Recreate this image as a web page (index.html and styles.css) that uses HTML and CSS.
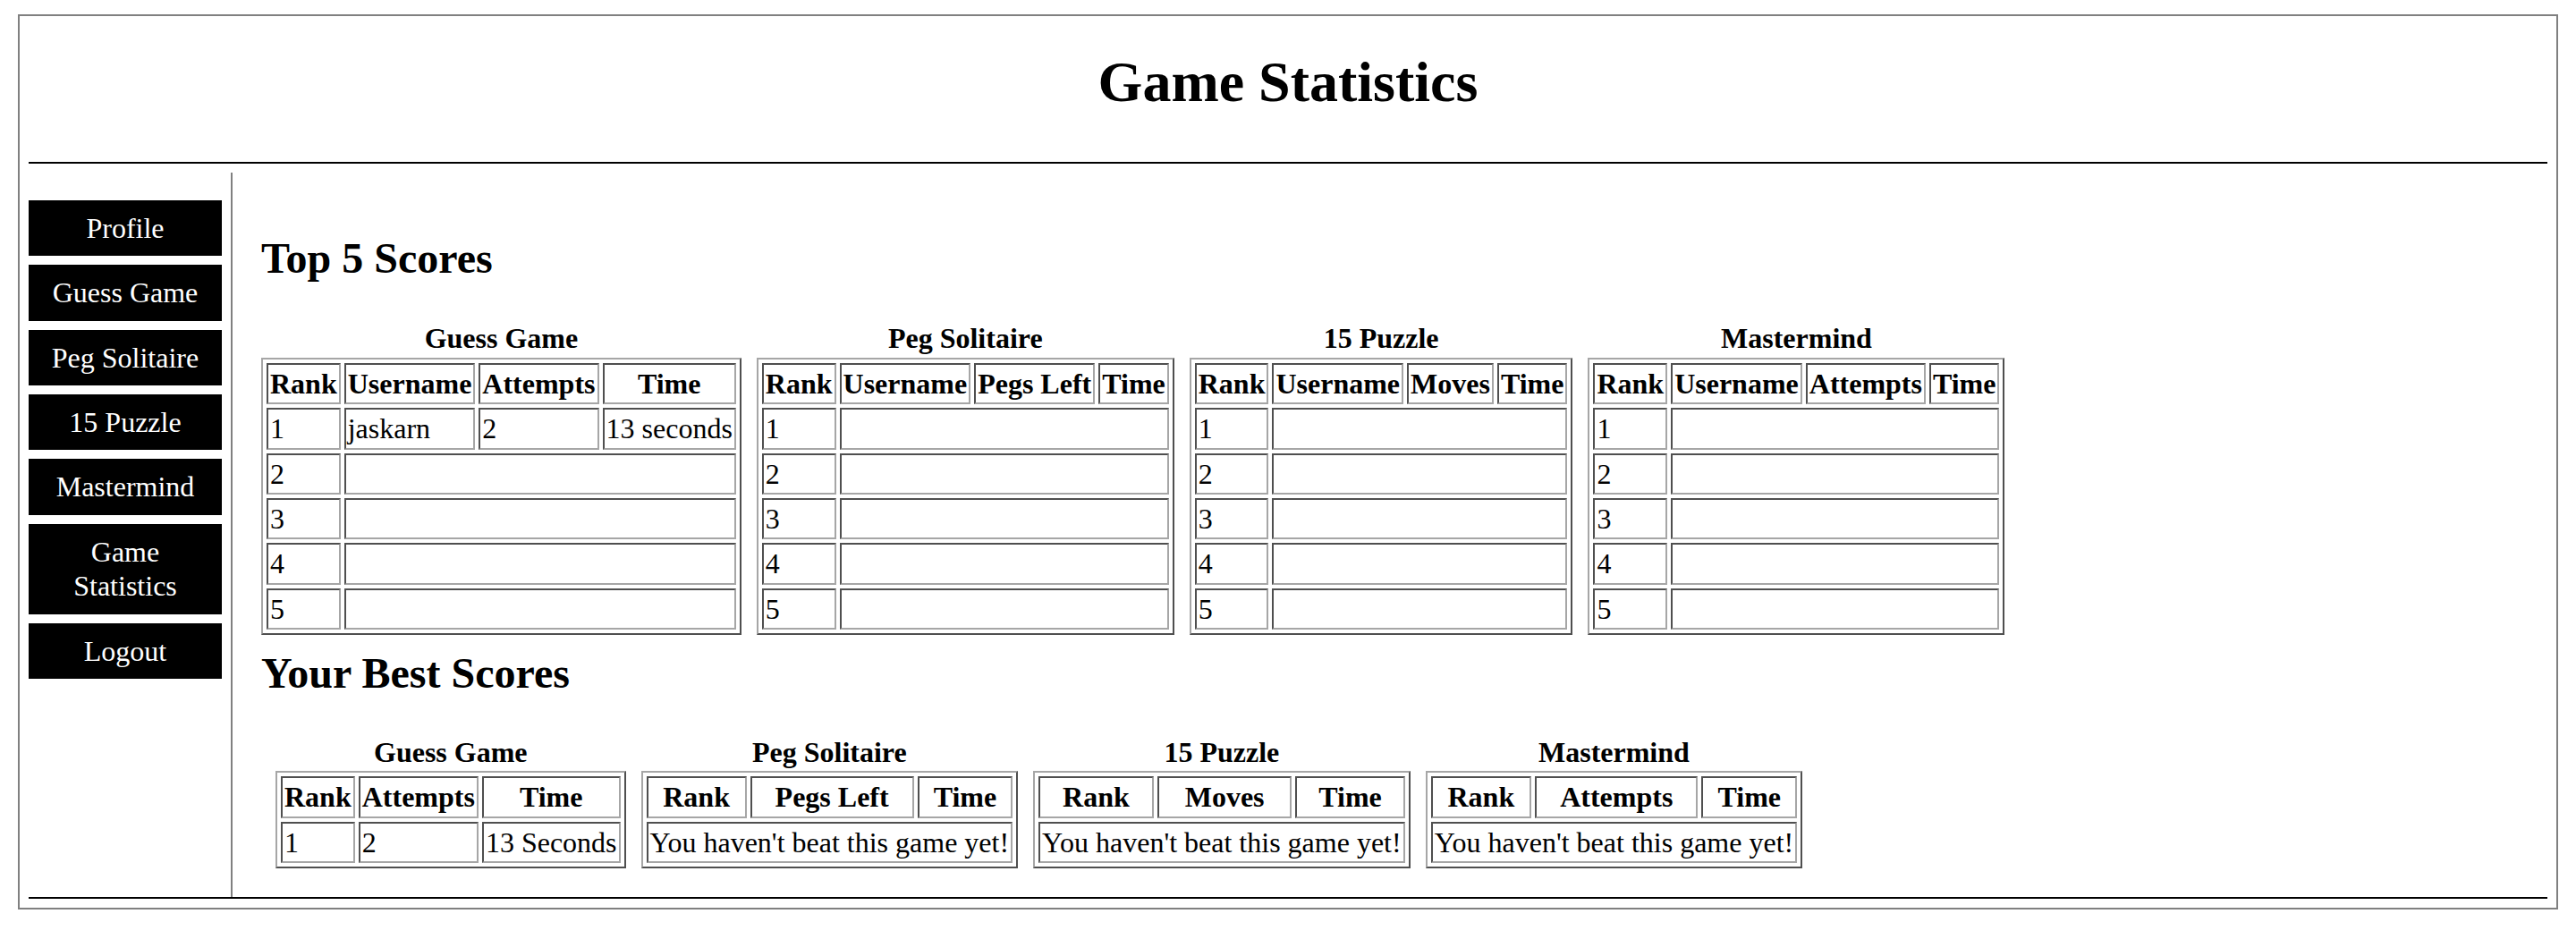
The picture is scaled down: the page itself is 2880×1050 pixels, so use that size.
FILE: index.html
```html
<!DOCTYPE html>
<html lang="en">
<head>
<meta charset="utf-8">
<title>Game Statistics</title>
<link rel="stylesheet" href="styles.css">
</head>
<body>
<div class="page">
  <header class="header">
    <h1 class="title">Game Statistics</h1>
  </header>
  <div class="main">
    <nav class="nav">
      <a class="nav-btn" href="#">Profile</a>
      <a class="nav-btn" href="#">Guess Game</a>
      <a class="nav-btn" href="#">Peg Solitaire</a>
      <a class="nav-btn" href="#">15 Puzzle</a>
      <a class="nav-btn" href="#">Mastermind</a>
      <a class="nav-btn" href="#">Game Statistics</a>
      <a class="nav-btn" href="#">Logout</a>
    </nav>
    <section class="content">
      <h2 class="section-title top-title">Top 5 Scores</h2>
      <div class="tables">
        <table class="score">
          <caption>Guess Game</caption>
          <tr><th>Rank</th><th>Username</th><th>Attempts</th><th>Time</th></tr>
          <tr><td>1</td><td>jaskarn</td><td>2</td><td>13 seconds</td></tr>
          <tr><td>2</td><td colspan="3"></td></tr>
          <tr><td>3</td><td colspan="3"></td></tr>
          <tr><td>4</td><td colspan="3"></td></tr>
          <tr><td>5</td><td colspan="3"></td></tr>
        </table>
        <table class="score">
          <caption>Peg Solitaire</caption>
          <tr><th>Rank</th><th>Username</th><th>Pegs Left</th><th>Time</th></tr>
          <tr><td>1</td><td colspan="3"></td></tr>
          <tr><td>2</td><td colspan="3"></td></tr>
          <tr><td>3</td><td colspan="3"></td></tr>
          <tr><td>4</td><td colspan="3"></td></tr>
          <tr><td>5</td><td colspan="3"></td></tr>
        </table>
        <table class="score">
          <caption>15 Puzzle</caption>
          <tr><th>Rank</th><th>Username</th><th>Moves</th><th>Time</th></tr>
          <tr><td>1</td><td colspan="3"></td></tr>
          <tr><td>2</td><td colspan="3"></td></tr>
          <tr><td>3</td><td colspan="3"></td></tr>
          <tr><td>4</td><td colspan="3"></td></tr>
          <tr><td>5</td><td colspan="3"></td></tr>
        </table>
        <table class="score">
          <caption>Mastermind</caption>
          <tr><th>Rank</th><th>Username</th><th>Attempts</th><th>Time</th></tr>
          <tr><td>1</td><td colspan="3"></td></tr>
          <tr><td>2</td><td colspan="3"></td></tr>
          <tr><td>3</td><td colspan="3"></td></tr>
          <tr><td>4</td><td colspan="3"></td></tr>
          <tr><td>5</td><td colspan="3"></td></tr>
        </table>
      </div>
      <h2 class="section-title best-title">Your Best Scores</h2>
      <div class="tables best">
        <table class="score">
          <caption>Guess Game</caption>
          <tr><th>Rank</th><th>Attempts</th><th>Time</th></tr>
          <tr><td>1</td><td>2</td><td>13 Seconds</td></tr>
        </table>
        <table class="score">
          <caption>Peg Solitaire</caption>
          <tr><th>Rank</th><th>Pegs Left</th><th>Time</th></tr>
          <tr><td colspan="3">You haven't beat this game yet!</td></tr>
        </table>
        <table class="score">
          <caption>15 Puzzle</caption>
          <tr><th>Rank</th><th>Moves</th><th>Time</th></tr>
          <tr><td colspan="3">You haven't beat this game yet!</td></tr>
        </table>
        <table class="score">
          <caption>Mastermind</caption>
          <tr><th>Rank</th><th>Attempts</th><th>Time</th></tr>
          <tr><td colspan="3">You haven't beat this game yet!</td></tr>
        </table>
      </div>
    </section>
  </div>
</div>
</body>
</html>
```

FILE: styles.css
```css
html {
  background: #ffffff;
}

body {
  margin: 16px 20px;
  font-family: "Liberation Serif", "Times New Roman", Times, serif;
  font-size: 32px;
  line-height: 1.2;
  color: #000000;
  background: #ffffff;
}

.page {
  border: 2px solid #808080;
  padding: 0 10px 10px;
}

.header {
  border-bottom: 2px solid #000000;
}

.title {
  font-size: 64px;
  font-weight: bold;
  line-height: 1.2;
  text-align: center;
  margin: 36px 0 50px;
}

.main {
  display: flex;
  margin-top: 10px;
  border-bottom: 2px solid #000000;
}

.nav {
  flex: none;
  width: 216px;
  padding: 31px 10px 0 0;
  border-right: 2px solid #808080;
  display: flex;
  flex-direction: column;
  gap: 10px;
}

.nav-btn {
  display: block;
  background: #000000;
  color: #ffffff;
  text-decoration: none;
  text-align: center;
  font-size: 32px;
  line-height: 38.4px;
  padding: 12px 12px;
}

.content {
  flex: 1;
  min-width: 0;
  padding: 27px 0 32px 32px;
}

.section-title {
  font-size: 48px;
  font-weight: bold;
  line-height: 1.2;
}

.top-title {
  margin: 40px 0 40px;
}

.best-title {
  margin: 14px 0 38px;
}

.tables {
  display: flex;
  align-items: flex-start;
  gap: 17px;
}

.tables.best {
  margin-left: 16px;
}

.score {
  border-collapse: separate;
  border-spacing: 4px;
  border: 2px solid;
  border-color: #a6a6a6 #4f4f4f #4f4f4f #a6a6a6;
  font-size: 32px;
}

.score caption {
  font-weight: bold;
  line-height: 38.4px;
  padding: 2px 0 2px;
}

.score th,
.score td {
  padding: 2px;
  border: 2px solid;
  border-color: #4f4f4f #a6a6a6 #a6a6a6 #4f4f4f;
  line-height: 38.4px;
  white-space: nowrap;
  vertical-align: middle;
}

.score th {
  font-weight: bold;
  text-align: center;
}

.score td {
  text-align: left;
}
```
